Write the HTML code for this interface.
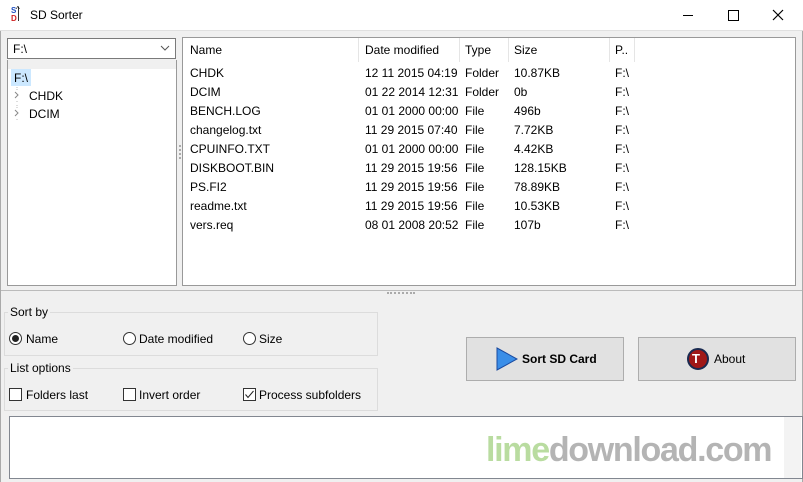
<!DOCTYPE html><html><head><style>
*{margin:0;padding:0;box-sizing:border-box}
body{width:803px;height:482px;background:#f0f0f0;font:12px "Liberation Sans",sans-serif;color:#000;position:relative;overflow:hidden}
.a{position:absolute}
.title{left:0;top:0;width:803px;height:31px;background:#fff;border-bottom:1px solid #e0e0e0}
.box{background:#fff;border:1px solid #828790}
.row{position:absolute;left:0;height:19px;line-height:19px;white-space:nowrap}
.row span{position:absolute}
.grp{border:1px solid #dcdcdc}
.lbl{background:#f0f0f0;padding:0 2px}
.rad{width:13px;height:13px;border:1px solid #333;border-radius:50%;background:#fff}
.chk{width:13px;height:13px;border:1px solid #333;background:#fff}
.btn{background:#e1e1e1;border:1px solid #adadad}
</style></head><body>
<div class="a title"></div>
<div class="a" style="left:11px;top:7px;font:bold 8px 'Liberation Sans';color:#2050c0;line-height:8px">S<br><span style="color:#d02020">D</span></div>
<div class="a" style="left:18px;top:7px;width:1px;height:14px;background:#333"></div>
<div class="a" style="left:16px;top:7px;font-size:8px;line-height:6px">^</div>
<div class="a" style="left:30px;top:8px;font-size:12px">SD Sorter</div>
<div class="a" style="left:683px;top:15px;width:10px;height:1px;background:#000"></div>
<div class="a" style="left:728px;top:10px;width:11px;height:11px;border:1px solid #000"></div>
<svg class="a" style="left:772px;top:9px" width="12" height="12"><path d="M1 1L11 11M11 1L1 11" stroke="#000" stroke-width="1.2"/></svg>
<div class="a" style="left:0;top:31px;width:1px;height:451px;background:#aaa"></div>
<div class="a" style="left:802px;top:31px;width:1px;height:451px;background:#aaa"></div>

<div class="a box" style="left:7px;top:38px;width:169px;height:21px;border-color:#7a7a7a"></div>
<div class="a" style="left:13px;top:42px">F:\</div>
<svg class="a" style="left:160px;top:45px" width="10" height="6"><path d="M1 1L5 5L9 1" stroke="#555" fill="none"/></svg>
<div class="a box" style="left:7px;top:60px;width:170px;height:226px;border-color:#999;border-top:none"></div>
<div class="a" style="left:8px;top:60px;width:168px;height:9px;background:#f0f0f0"></div>
<div class="a" style="left:11px;top:69px;width:20px;height:17px;background:#cce8ff"></div>
<div class="a" style="left:14px;top:71px">F:\</div>
<svg class="a" style="left:13px;top:86px" width="8" height="36"><path d="M4 1V4M4 15V17M4 19V22M4 33V35" stroke="#bbb" stroke-dasharray="1 1"/><path d="M2 6L5 9L2 12M2 24L5 27L2 30" stroke="#888" fill="none"/></svg>
<div class="a" style="left:29px;top:89px">CHDK</div>
<div class="a" style="left:29px;top:107px">DCIM</div>
<div class="a" style="left:179px;top:145px;width:2px;height:14px;border-left:2px dotted #aaa"></div>

<div class="a box" style="left:182px;top:37px;width:614px;height:249px;border-color:#999">
<div class="a" style="left:175px;top:0;width:1px;height:24px;background:#e5e5e5"></div>
<div class="a" style="left:276px;top:0;width:1px;height:24px;background:#e5e5e5"></div>
<div class="a" style="left:325px;top:0;width:1px;height:24px;background:#e5e5e5"></div>
<div class="a" style="left:426px;top:0;width:1px;height:24px;background:#e5e5e5"></div>
<div class="a" style="left:451px;top:0;width:1px;height:24px;background:#e5e5e5"></div>
<div class="row" style="top:3px"><span style="left:7px">Name</span><span style="left:182px">Date modified</span><span style="left:282px">Type</span><span style="left:331px">Size</span><span style="left:432px">P..</span></div>
<div class="row" style="top:26px"><span style="left:7px">CHDK</span><span style="left:182px">12 11 2015 04:19</span><span style="left:282px">Folder</span><span style="left:331px">10.87KB</span><span style="left:432px">F:\</span></div>
<div class="row" style="top:45px"><span style="left:7px">DCIM</span><span style="left:182px">01 22 2014 12:31</span><span style="left:282px">Folder</span><span style="left:331px">0b</span><span style="left:432px">F:\</span></div>
<div class="row" style="top:64px"><span style="left:7px">BENCH.LOG</span><span style="left:182px">01 01 2000 00:00</span><span style="left:282px">File</span><span style="left:331px">496b</span><span style="left:432px">F:\</span></div>
<div class="row" style="top:83px"><span style="left:7px">changelog.txt</span><span style="left:182px">11 29 2015 07:40</span><span style="left:282px">File</span><span style="left:331px">7.72KB</span><span style="left:432px">F:\</span></div>
<div class="row" style="top:102px"><span style="left:7px">CPUINFO.TXT</span><span style="left:182px">01 01 2000 00:00</span><span style="left:282px">File</span><span style="left:331px">4.42KB</span><span style="left:432px">F:\</span></div>
<div class="row" style="top:121px"><span style="left:7px">DISKBOOT.BIN</span><span style="left:182px">11 29 2015 19:56</span><span style="left:282px">File</span><span style="left:331px">128.15KB</span><span style="left:432px">F:\</span></div>
<div class="row" style="top:140px"><span style="left:7px">PS.FI2</span><span style="left:182px">11 29 2015 19:56</span><span style="left:282px">File</span><span style="left:331px">78.89KB</span><span style="left:432px">F:\</span></div>
<div class="row" style="top:159px"><span style="left:7px">readme.txt</span><span style="left:182px">11 29 2015 19:56</span><span style="left:282px">File</span><span style="left:331px">10.53KB</span><span style="left:432px">F:\</span></div>
<div class="row" style="top:178px"><span style="left:7px">vers.req</span><span style="left:182px">08 01 2008 20:52</span><span style="left:282px">File</span><span style="left:331px">107b</span><span style="left:432px">F:\</span></div>
</div>
<div class="a" style="left:1px;top:290px;width:801px;height:1px;background:#bbb"></div>
<div class="a" style="left:387px;top:292px;width:28px;height:2px;border-top:2px dotted #aaa"></div>

<div class="a grp" style="left:4px;top:312px;width:374px;height:44px"></div>
<div class="a lbl" style="left:8px;top:305px">Sort by</div>
<div class="a rad" style="left:9px;top:332px"><div style="width:7px;height:7px;border-radius:50%;background:#222;margin:2px"></div></div>
<div class="a" style="left:26px;top:332px">Name</div>
<div class="a rad" style="left:123px;top:332px"></div>
<div class="a" style="left:139px;top:332px">Date modified</div>
<div class="a rad" style="left:243px;top:332px"></div>
<div class="a" style="left:259px;top:332px">Size</div>

<div class="a grp" style="left:4px;top:368px;width:374px;height:43px"></div>
<div class="a lbl" style="left:8px;top:361px">List options</div>
<div class="a chk" style="left:9px;top:388px"></div>
<div class="a" style="left:26px;top:388px">Folders last</div>
<div class="a chk" style="left:123px;top:388px"></div>
<div class="a" style="left:139px;top:388px">Invert order</div>
<div class="a chk" style="left:243px;top:388px"><svg width="11" height="11" style="display:block"><path d="M1.5 5.5L4 8.5L9.5 2" stroke="#222" fill="none"/></svg></div>
<div class="a" style="left:259px;top:388px">Process subfolders</div>

<div class="a btn" style="left:466px;top:337px;width:158px;height:44px"></div>
<svg class="a" style="left:496px;top:347px" width="22" height="24"><path d="M1 1L21 12L1 23Z" fill="#3a8ee8" stroke="#1a4aa0"/></svg>
<div class="a" style="left:522px;top:352px;font-weight:bold">Sort SD Card</div>
<div class="a btn" style="left:638px;top:337px;width:158px;height:44px"></div>
<div class="a" style="left:687px;top:348px;width:22px;height:22px;border-radius:50%;background:#a01818;border:2px solid #1a2a50"></div>
<div class="a" style="left:692px;top:351px;color:#fff;font-weight:bold;font-size:13px">T</div>
<div class="a" style="left:714px;top:352px">About</div>

<div class="a" style="left:9px;top:416px;width:794px;height:63px;background:#fff;border:1px solid #828790"></div>
<div class="a" style="left:486px;top:431px;font:bold 34px 'Liberation Sans',sans-serif;letter-spacing:-1.3px;white-space:nowrap"><span style="color:#b9dca0">lime</span><span style="color:#b4b4b4">download.com</span></div>
<div class="a" style="left:784px;top:417px;width:17px;height:61px;background:#f0f0f0;opacity:.8"></div>
</body></html>
